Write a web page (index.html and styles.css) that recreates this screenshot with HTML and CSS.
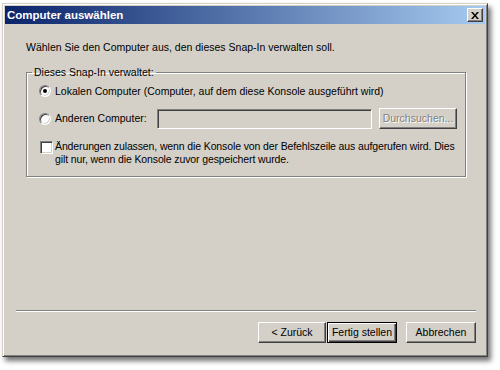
FILE: index.html
```html
<!DOCTYPE html>
<html>
<head>
<meta charset="utf-8">
<link rel="stylesheet" href="styles.css">
</head>
<body>
<div class="window">
  <div class="titlebar">
    <span class="title">Computer auswählen</span>
    <span class="close"><svg width="8" height="7" viewBox="0 0 8 7"><path d="M0 0h2l2 2.5L6 0h2L5 3.5 8 7H6L4 4.5 2 7H0l3-3.5z" fill="#000"/></svg></span>
  </div>
  <div class="body">
    <p class="intro">Wählen Sie den Computer aus, den dieses Snap-In verwalten soll.</p>
    <fieldset class="group">
      <legend>Dieses Snap-In verwaltet:</legend>
      <div class="row r1"><span class="radio checked"></span><span>Lokalen Computer (Computer, auf dem diese Konsole ausgeführt wird)</span></div>
      <div class="row r2"><span class="radio"></span><span class="lbl">Anderen Computer:</span><span class="textbox"></span><span class="btn disabled browse">Durchsuchen...</span></div>
      <div class="row r3"><span class="check"></span><span class="ctext">Änderungen zulassen, wenn die Konsole von der Befehlszeile aus aufgerufen wird. Dies gilt nur, wenn die Konsole zuvor gespeichert wurde.</span></div>
    </fieldset>
    <div class="spacer"></div>
    <div class="sep"></div>
    <div class="buttons">
      <span class="btn back">&lt; Zurück</span>
      <span class="btn default">Fertig stellen</span>
      <span class="btn cancel">Abbrechen</span>
    </div>
  </div>
</div>
</body>
</html>
```
FILE: styles.css
```css
html, body { margin: 0; padding: 0; background: #fff; }
body { width: 500px; height: 370px; overflow: hidden; font-family: "Liberation Sans", Arial, sans-serif; font-size: 10.5px; line-height: 13px; color: #000; }
.window {
  margin: 3px 0 0 2px;
  width: 486px; height: 354px;
  box-sizing: border-box;
  background: #d4d0c8;
  border: 1px solid #d4d0c8;
  border-right-color: #404040; border-bottom-color: #404040;
  box-shadow: inset 1px 1px 0 #fff, inset -1px -1px 0 #808080, 3px 4px 5px rgba(0,0,0,0.55);
  padding: 2px;
  display: flex; flex-direction: column;
}
.titlebar {
  height: 18px; flex: none;
  background: linear-gradient(to right, #0a246a, #a6caf0);
  display: flex; align-items: center; justify-content: space-between;
  padding: 0 2px 0 2px;
}
.title { color: #fff; font-weight: bold; font-size: 11.5px; }
.close {
  width: 16px; height: 14px; box-sizing: border-box;
  background: #d4d0c8;
  border: 1px solid; border-color: #fff #404040 #404040 #fff;
  box-shadow: inset -1px -1px 0 #808080;
  display: flex; align-items: center; justify-content: center;
}
.body { flex: 1; display: flex; flex-direction: column; padding: 0 9px 11px 11px; }
.intro { margin: 17px 0 0 10px; }
.group {
  margin: 12px 10px 0 10px;
  border: 1px solid #808080;
  box-shadow: 1px 1px 0 #fff, inset 1px 1px 0 #fff;
  padding: 0 0 0 12px;
  height: 111px; box-sizing: border-box;
}
legend { padding: 0 2px; margin-left: -7px; }
.row { display: flex; align-items: center; }
.r1 { margin-top: 5px; height: 14px; }
.r2 { margin-top: 10px; height: 21px; }
.r3 { align-items: flex-start; margin-top: 11px; }
.ctext { letter-spacing: -0.12px; }
.radio {
  width: 12px; height: 12px; border-radius: 50%; box-sizing: border-box;
  background: #fff;
  border: 1px solid; border-color: #808080 #fff #fff #808080;
  box-shadow: inset 1px 1px 0 #404040, inset -1px -1px 0 #d4d0c8;
  margin-right: 4px; position: relative; flex: none;
}
.radio.checked::after { content: ""; position: absolute; left: 3px; top: 3px; width: 4px; height: 4px; border-radius: 50%; background: #000; }
.check {
  width: 13px; height: 13px; box-sizing: border-box; background: #fff; flex: none;
  border: 1px solid; border-color: #808080 #fff #fff #808080;
  box-shadow: inset 1px 1px 0 #404040, inset -1px -1px 0 #d4d0c8;
  margin: 1px 2px 0 1px;
}
.lbl { width: 102px; flex: none; }
.textbox {
  width: 215px; height: 20px; box-sizing: border-box; background: #d4d0c8; flex: none;
  border: 1px solid; border-color: #808080 #fff #fff #808080;
  box-shadow: inset 1px 1px 0 #404040, inset -1px -1px 0 #d4d0c8;
}
.btn {
  display: inline-flex; align-items: center; justify-content: center;
  height: 21px; box-sizing: border-box; background: #d4d0c8; flex: none;
  border: 1px solid; border-color: #fff #404040 #404040 #fff;
  box-shadow: inset -1px -1px 0 #808080;
}
.browse { width: 78px; margin-left: 7px; color: #808080; text-shadow: 1px 1px 0 #fff; }
.spacer { flex: 1; }
.sep { height: 0; border-top: 1px solid #808080; border-bottom: 1px solid #fff; margin: 0 0 10px 0; }
.buttons { display: flex; justify-content: flex-end; }
.back { width: 68px; }
.default { width: 70px; margin-left: 1px; border: 1px solid #000; box-shadow: inset 1px 1px 0 #fff, inset -1px -1px 0 #404040, inset -2px -2px 0 #808080; }
.cancel { width: 70px; margin-left: 9px; }
```
